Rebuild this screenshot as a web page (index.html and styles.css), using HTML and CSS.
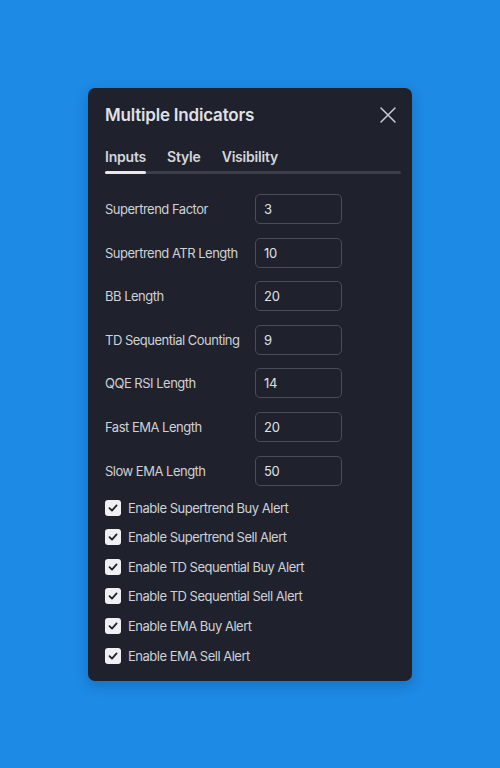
FILE: index.html
```html
<!DOCTYPE html>
<html>
<head>
    <title>Multiple Indicators</title>
    <meta name="viewport" content="width=device-width, initial-scale=1.0">
    <link rel="stylesheet" href="styles.css">
</head>
<body>
    <div class="dialog">
        <div class="header">
            <h1>Multiple Indicators</h1>
            <button class="close" aria-label="Close">
                <svg width="16" height="16" viewBox="0 0 16 16"><path d="M1 1L15 15M15 1L1 15" stroke="#c9ccd4" stroke-width="1.5" stroke-linecap="round"/></svg>
            </button>
        </div>
        <div class="tabs">
            <span class="tab active">Inputs</span>
            <span class="tab">Style</span>
            <span class="tab">Visibility</span>
        </div>
        <div class="track"><div class="thumb"></div></div>

        <div class="fields">
            <label class="field"><span>Supertrend Factor</span><input value="3"></label>
            <label class="field"><span>Supertrend ATR Length</span><input value="10"></label>
            <label class="field"><span>BB Length</span><input value="20"></label>
            <label class="field"><span>TD Sequential Counting</span><input value="9"></label>
            <label class="field"><span>QQE RSI Length</span><input value="14"></label>
            <label class="field"><span>Fast EMA Length</span><input value="20"></label>
            <label class="field"><span>Slow EMA Length</span><input value="50"></label>
        </div>

        <div class="checks">
            <label class="check"><span class="box"><svg width="10" height="10" viewBox="0 0 10 10"><path d="M1.5 5.2L4 7.6L8.6 2.4" fill="none" stroke="#1f222c" stroke-width="1.8" stroke-linecap="round" stroke-linejoin="round"/></svg></span>Enable Supertrend Buy Alert</label>
            <label class="check"><span class="box"><svg width="10" height="10" viewBox="0 0 10 10"><path d="M1.5 5.2L4 7.6L8.6 2.4" fill="none" stroke="#1f222c" stroke-width="1.8" stroke-linecap="round" stroke-linejoin="round"/></svg></span>Enable Supertrend Sell Alert</label>
            <label class="check"><span class="box"><svg width="10" height="10" viewBox="0 0 10 10"><path d="M1.5 5.2L4 7.6L8.6 2.4" fill="none" stroke="#1f222c" stroke-width="1.8" stroke-linecap="round" stroke-linejoin="round"/></svg></span>Enable TD Sequential Buy Alert</label>
            <label class="check"><span class="box"><svg width="10" height="10" viewBox="0 0 10 10"><path d="M1.5 5.2L4 7.6L8.6 2.4" fill="none" stroke="#1f222c" stroke-width="1.8" stroke-linecap="round" stroke-linejoin="round"/></svg></span>Enable TD Sequential Sell Alert</label>
            <label class="check"><span class="box"><svg width="10" height="10" viewBox="0 0 10 10"><path d="M1.5 5.2L4 7.6L8.6 2.4" fill="none" stroke="#1f222c" stroke-width="1.8" stroke-linecap="round" stroke-linejoin="round"/></svg></span>Enable EMA Buy Alert</label>
            <label class="check"><span class="box"><svg width="10" height="10" viewBox="0 0 10 10"><path d="M1.5 5.2L4 7.6L8.6 2.4" fill="none" stroke="#1f222c" stroke-width="1.8" stroke-linecap="round" stroke-linejoin="round"/></svg></span>Enable EMA Sell Alert</label>
        </div>
    </div>
</body>
</html>
```

FILE: styles.css
```css
body {
    margin: 0;
    min-height: 768px;
    background: #1d8ae5;
    font-family: Inter, 'Noto Sans', Arial, sans-serif;
    display: flex;
    justify-content: center;
    align-items: flex-start;
}

.dialog {
    width: 324px;
    margin-top: 88px;
    box-sizing: border-box;
    padding: 0 11px 17px 17px;
    background: #1f222c;
    border-radius: 7px;
    box-shadow: 0 4px 14px rgba(0, 0, 0, 0.2);
    color: #d6d8de;
}

.header {
    display: flex;
    align-items: center;
    justify-content: space-between;
    height: 54px;
}

.header h1 {
    margin: 0;
    font-size: 17px;
    font-weight: 600;
    color: #dfe1e6;
    letter-spacing: -0.2px;
}

.close {
    background: none;
    border: 0;
    padding: 0;
    margin-right: 5px;
    width: 16px;
    height: 16px;
    display: flex;
}

.tabs {
    display: flex;
    gap: 21px;
    margin-top: 2px;
    height: 24px;
    align-items: center;
}

.tab {
    font-size: 14px;
    font-weight: 600;
    letter-spacing: -0.2px;
    color: #d4d6dc;
}

.track {
    height: 3px;
    background: #3b3e48;
    border-radius: 2px;
    margin-top: 3px;
}

.thumb {
    width: 41px;
    height: 3px;
    background: #e6e8ec;
    border-radius: 2px;
}

.fields {
    display: flex;
    flex-direction: column;
    gap: 13.6px;
    margin-top: 20px;
}

.field {
    display: flex;
    align-items: center;
    height: 30px;
    font-size: 13px;
    letter-spacing: -0.5px;
    color: #cfd1d7;
}

.field span {
    width: 150px;
    white-space: nowrap;
}

.field input {
    width: 87px;
    height: 30px;
    box-sizing: border-box;
    background: transparent;
    border: 1px solid #4a4d58;
    border-radius: 5px;
    padding: 0 8px;
    font-family: inherit;
    font-size: 13px;
    letter-spacing: -0.3px;
    color: #dfe1e6;
}

.checks {
    display: flex;
    flex-direction: column;
    gap: 13.6px;
    margin-top: 14px;
}

.check {
    display: flex;
    align-items: center;
    gap: 7px;
    height: 16px;
    font-size: 13px;
    letter-spacing: -0.5px;
    color: #cfd1d7;
}

.box {
    width: 16px;
    height: 16px;
    border-radius: 3px;
    background: #eef0f4;
    display: flex;
    align-items: center;
    justify-content: center;
}
```
